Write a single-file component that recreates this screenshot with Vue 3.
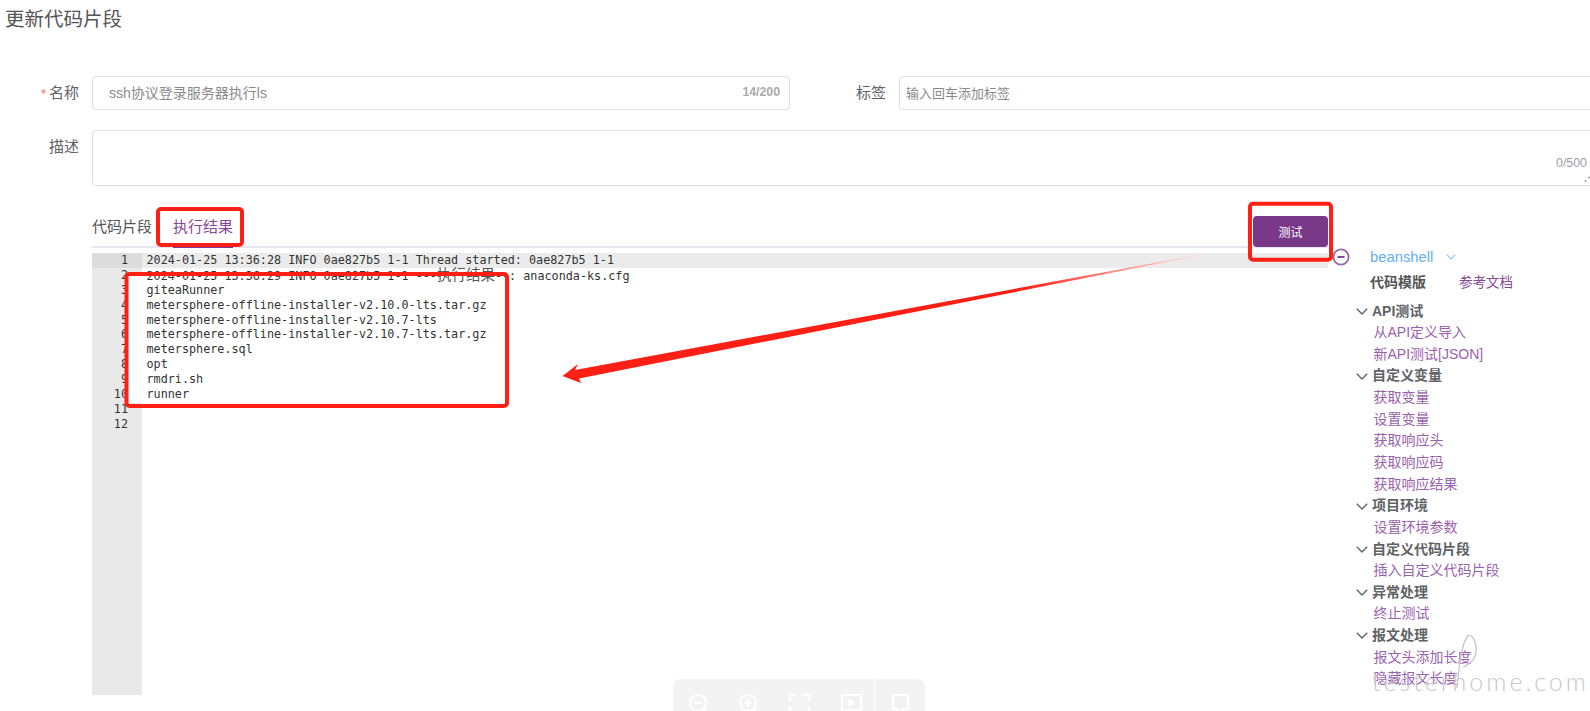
<script setup>
const codeLines = [
  '2024-01-25 13:36:28 INFO 0ae827b5 1-1 Thread started: 0ae827b5 1-1',
  null,
  'giteaRunner',
  'metersphere-offline-installer-v2.10.0-lts.tar.gz',
  'metersphere-offline-installer-v2.10.7-lts',
  'metersphere-offline-installer-v2.10.7-lts.tar.gz',
  'metersphere.sql',
  'opt',
  'rmdri.sh',
  'runner',
  '',
  ''
]
const tree = [
  { title: 'API测试', items: ['从API定义导入', '新API测试[JSON]'] },
  { title: '自定义变量', items: ['获取变量', '设置变量', '获取响应头', '获取响应码', '获取响应结果'] },
  { title: '项目环境', items: ['设置环境参数'] },
  { title: '自定义代码片段', items: ['插入自定义代码片段'] },
  { title: '异常处理', items: ['终止测试'] },
  { title: '报文处理', items: ['报文头添加长度', '隐藏报文长度'] }
]
</script>

<template>
  <div class="page">
    <h1 class="title">更新代码片段</h1>

    <div class="form-row first">
      <label class="label"><i class="star">*</i>名称</label>
      <div class="field name-field">
        <span class="value">ssh协议登录服务器执行ls</span>
        <span class="count">14/200</span>
      </div>
      <label class="label tag-label">标签</label>
      <div class="field tag-field"><span class="placeholder">输入回车添加标签</span></div>
    </div>

    <div class="form-row second">
      <label class="label">描述</label>
      <div class="field area">
        <span class="area-count">0/500</span>
        <svg class="grip" width="6" height="6" viewBox="0 0 6 6"><path d="M1 5.500 2 4.500M4.500 2 5.500 1" stroke="#666" stroke-width="1.200" /></svg>
      </div>
    </div>

    <div class="tabs">
      <div class="tab">代码片段</div>
      <div class="tab active">执行结果</div>
      <button class="run">测试</button>
    </div>

    <div class="body">
      <div class="editor">
        <div class="gutter">
          <div v-for="(l, i) in codeLines" :key="i" class="num" :class="{ current: i === 0 }">{{ i + 1 }}</div>
        </div>
        <div class="code">
          <div v-for="(l, i) in codeLines" :key="i" class="line" :class="{ current: i === 0 }">
            <template v-if="l === null">2024-01-25 13:36:29 INFO 0ae827b5 1-1 ---<span class="cjk">执行结果</span>--: anaconda-ks.cfg</template>
            <template v-else>{{ l }}</template>
          </div>
        </div>
      </div>

      <aside class="side">
        <div class="lang">
          <svg class="minus" width="18" height="18" viewBox="0 0 18 18"><circle cx="9" cy="9" r="7.600" fill="none" stroke="#9565ab" stroke-width="1.900" /><path d="M5.500 9h7" stroke="#7d4a95" stroke-width="2" /></svg>
          <span class="lang-name">beanshell</span>
          <svg class="lang-caret" width="10" height="6" viewBox="0 0 10 6"><path d="M.7.7 5 5 9.300.7" fill="none" stroke="#8cc5ff" stroke-width="1.100" /></svg>
        </div>
        <div class="side-head"><b>代码模版</b><a>参考文档</a></div>
        <div v-for="g in tree" :key="g.title" class="group">
          <div class="node parent">
            <svg width="12" height="7" viewBox="0 0 12 7"><path d="M.8.8 6 6 11.200.8" fill="none" stroke="#606266" stroke-width="1.400" /></svg>
            <span>{{ g.title }}</span>
          </div>
          <div v-for="c in g.items" :key="c" class="node leaf">{{ c }}</div>
        </div>
      </aside>
    </div>

    <div class="toolbar">
      <svg width="252" height="32" viewBox="0 0 252 32" fill="none" stroke="#fff" stroke-width="2.200">
        <circle cx="25" cy="24" r="8" /><path d="M21 24h8M31 30l5 5" />
        <circle cx="75" cy="24" r="8" /><path d="M71 24h8M75 20v8M81 30l5 5" />
        <path d="M117 22v-6h6M136 22v-6h-6M117 27v6h6M136 27v6h-6" stroke-width="2.600" />
        <path d="M169 16h19v15h-19z" />
        <path d="M175.500 20l7 4-7 4z" fill="#fff" stroke="none" />
        <path d="M220 16h15v14h-4l-3.500 4-3.500-4h-4z" />
        <path d="M202 0v32" stroke="#fafafa" stroke-width="1" />
      </svg>
    </div>

    <svg class="overlay" width="1590" height="711" viewBox="0 0 1590 711">
      <defs>
        <linearGradient id="fade" gradientUnits="userSpaceOnUse" x1="1205" y1="254" x2="1020" y2="290">
          <stop offset="0" stop-color="#ffe6e4" />
          <stop offset="0.5" stop-color="#ff8a80" />
          <stop offset="1" stop-color="#fe2015" />
        </linearGradient>
      </defs>
      <rect x="128" y="276" width="14" height="127" fill="#fff" />
      <rect x="158" y="209" width="84" height="36" rx="3" fill="none" stroke="#fe2015" stroke-width="4" />
      <rect x="1250" y="203.800" width="81" height="56" rx="3" fill="none" stroke="#fe2015" stroke-width="4" />
      <rect x="126.500" y="274" width="380.500" height="132" rx="3" fill="none" stroke="#fe2015" stroke-width="4" />
      <path d="M562.500 376 578 364 575 370 1205 253.600 1205 254.300 579 378.500 581 383z" fill="url(#fade)" />
    </svg>

    <div class="watermark">testerhome.com</div>
    <svg class="wm-loop" width="30" height="60" viewBox="0 0 30 60"><path d="M4 54C6 34 8 10 15 1.500c5-1 9 8 8 17-1 8-7 12-13 15" fill="none" stroke="#c4c4c4" stroke-width="1.300" /></svg>
  </div>
</template>

<style>
html, body { margin: 0; background: #fff; }
</style>

<style scoped>
.page {
  position: relative;
  width: 1590px;
  height: 711px;
  overflow: hidden;
  background: #fff;
  color: #606266;
  font-family: "Liberation Sans", "Noto Sans CJK SC", sans-serif;
}
.title {
  margin: 0;
  padding-left: 5px;
  height: 38px;
  font-size: 19.5px;
  font-weight: 400;
  line-height: 38px;
  color: #555;
}
.form-row { display: flex; }
.first { margin-top: 38px; height: 34px; }
.second { margin-top: 20px; height: 56px; }
.label {
  flex: none;
  width: 79px;
  margin-right: 13px;
  font-size: 15px;
  line-height: 33px;
  text-align: right;
  color: #606266;
}
.star { margin-right: 3px; font-style: normal; font-size: 13px; color: #f56c6c; }
.field {
  box-sizing: border-box;
  position: relative;
  border: 1px solid #dcdfe6;
  border-radius: 4px;
  background: #fff;
  font-size: 13px;
}
.name-field {
  flex: none;
  width: 698px;
  display: flex;
  align-items: center;
  justify-content: space-between;
  padding: 0 9px 2px 16px;
}
.value { font-size: 14px; color: #8a8a8e; }
.count { font-size: 12.300px; font-weight: 700; color: #aaa; }
.tag-label { width: 31px; margin: 0 13px 0 65px; }
.tag-field {
  flex: none;
  width: 720px;
  display: flex;
  align-items: center;
  padding: 0 0 1px 6px;
}
.placeholder { color: #8a8a8a; }
.area { flex: none; width: 1520px; }
.area-count {
  position: absolute;
  top: 25px;
  left: 1463px;
  font-size: 12.400px;
  line-height: 14px;
  color: #9a9da3;
}
.grip { position: absolute; top: 45px; left: 1491px; }

.tabs {
  box-sizing: border-box;
  display: flex;
  align-items: flex-end;
  width: 1236px;
  height: 62px;
  margin-left: 92px;
  border-bottom: 2px solid #e4e7ed;
}
.tab {
  box-sizing: border-box;
  height: 40px;
  margin-right: 21px;
  margin-bottom: -2px;
  padding-top: 2px;
  border-bottom: 2px solid transparent;
  font-size: 15px;
  line-height: 34px;
  color: #555;
}
.tab.active { color: #86479a; border-bottom-color: #783887; }
.run {
  width: 75px;
  height: 31px;
  margin: 0 0 -1px auto;
  padding: 0;
  border: 0;
  border-radius: 4px;
  background: #783887;
  color: #fff;
  font-family: inherit;
  font-size: 12px;
}

.body { display: flex; margin-top: 5px; margin-left: 92px; }
.editor {
  flex: none;
  display: flex;
  width: 1236px;
  height: 442px;
  font-family: "DejaVu Sans Mono", "Noto Sans CJK SC", monospace;
  font-size: 11.780px;
  line-height: 14.900px;
  color: #333;
}
.gutter { flex: none; width: 50px; background: #e9e9e9; }
.num { box-sizing: border-box; height: 14.900px; padding-right: 14px; text-align: right; }
.num.current { background: #dcdcdc; }
.code { flex: 1; }
.line { height: 14.900px; padding-left: 4.500px; white-space: pre; }
.line.current { background: #ebebeb; }
.cjk { font-size: 14.500px; line-height: 14px; color: #555; }

.side {
  flex: none;
  margin: -7px 0 0 5px;
  width: 257px;
  font-size: 14px;
}
.lang { display: flex; align-items: center; height: 22px; }
.minus { margin-left: -1px; }
.lang-name { margin-left: 20px; font-size: 14.800px; color: #5fb0ff; }
.lang-caret { margin-left: 13px; }
.side-head { display: flex; align-items: center; height: 26px; margin-bottom: 6.500px; padding-left: 37px; }
.side-head b { font-weight: 700; color: #555; }
.side-head a { margin-left: 33px; font-size: 13.500px; color: #844a96; }
.node { height: 21.650px; line-height: 21.650px; white-space: nowrap; }
.parent { display: flex; align-items: center; padding-left: 23px; font-weight: 700; color: #606266; }
.parent span { margin-left: 4px; }
.leaf { padding-left: 40.500px; color: #9a62ad; }

.toolbar {
  position: absolute;
  left: 673px;
  top: 679px;
  width: 252px;
  height: 40px;
  border-radius: 8px;
  background: #f3f3f3;
}
.toolbar svg { display: block; }
.overlay { position: absolute; left: 0; top: 0; pointer-events: none; }
.watermark {
  position: absolute;
  left: 1372px;
  top: 663px;
  font-family: Lato, sans-serif;
  font-weight: 300;
  font-size: 25px;
  letter-spacing: 3px;
  line-height: 36px;
  white-space: nowrap;
  color: #c9c9c9;
  pointer-events: none;
}
.wm-loop { position: absolute; left: 1453px; top: 634px; pointer-events: none; }
</style>
